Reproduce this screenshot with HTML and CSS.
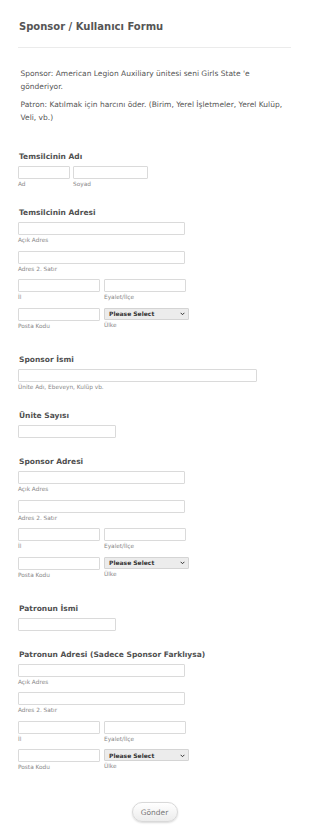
FILE: index.html
```html
<!DOCTYPE html>
<html lang="tr">
<head>
<meta charset="utf-8">
<title>Sponsor / Kullanıcı Formu</title>
<link rel="stylesheet" href="styles.css">
</head>
<body>
<div class="form">
  <h1 class="title">Sponsor / Kullanıcı Formu</h1>
  <hr class="rule">
  <div class="desc">
    <p>Sponsor: American Legion Auxiliary ünitesi seni Girls State 'e gönderiyor.</p>
    <p>Patron: Katılmak için harcını öder. (Birim, Yerel İşletmeler, Yerel Kulüp, Veli, vb.)</p>
  </div>

  <div class="field">
    <div class="label">Temsilcinin Adı</div>
    <div class="row tight">
      <div class="cell"><input class="input w-first" type="text"><span class="sub">Ad</span></div>
      <div class="cell"><input class="input w-last" type="text"><span class="sub">Soyad</span></div>
    </div>
  </div>

  <div class="field addr">
    <div class="label">Temsilcinin Adresi</div>
    <div class="row"><div class="cell"><input class="input w-full" type="text"><span class="sub">Açık Adres</span></div></div>
    <div class="row"><div class="cell"><input class="input w-full" type="text"><span class="sub">Adres 2. Satır</span></div></div>
    <div class="row">
      <div class="cell"><input class="input w-half" type="text"><span class="sub">İl</span></div>
      <div class="cell"><input class="input w-half" type="text"><span class="sub">Eyalet/İlçe</span></div>
    </div>
    <div class="row">
      <div class="cell"><input class="input w-half" type="text"><span class="sub">Posta Kodu</span></div>
      <div class="cell"><div class="select"><span>Please Select</span><svg class="chev" viewBox="0 0 8 5" width="5" height="3.5"><path d="M1 1 L4 4 L7 1" fill="none" stroke="#333" stroke-width="1.6"/></svg></div><span class="sub">Ülke</span></div>
    </div>
  </div>

  <div class="field">
    <div class="label">Sponsor İsmi</div>
    <div class="cell"><input class="input w-wide" type="text"><span class="sub">Ünite Adı, Ebeveyn, Kulüp vb.</span></div>
  </div>

  <div class="field nosub">
    <div class="label">Ünite Sayısı</div>
    <input class="input w-small" type="text">
  </div>

  <div class="field addr">
    <div class="label">Sponsor Adresi</div>
    <div class="row"><div class="cell"><input class="input w-full" type="text"><span class="sub">Açık Adres</span></div></div>
    <div class="row"><div class="cell"><input class="input w-full" type="text"><span class="sub">Adres 2. Satır</span></div></div>
    <div class="row">
      <div class="cell"><input class="input w-half" type="text"><span class="sub">İl</span></div>
      <div class="cell"><input class="input w-half" type="text"><span class="sub">Eyalet/İlçe</span></div>
    </div>
    <div class="row">
      <div class="cell"><input class="input w-half" type="text"><span class="sub">Posta Kodu</span></div>
      <div class="cell"><div class="select"><span>Please Select</span><svg class="chev" viewBox="0 0 8 5" width="5" height="3.5"><path d="M1 1 L4 4 L7 1" fill="none" stroke="#333" stroke-width="1.6"/></svg></div><span class="sub">Ülke</span></div>
    </div>
  </div>

  <div class="field nosub">
    <div class="label">Patronun İsmi</div>
    <input class="input w-small" type="text">
  </div>

  <div class="field last">
    <div class="label">Patronun Adresi (Sadece Sponsor Farklıysa)</div>
    <div class="row"><div class="cell"><input class="input w-full" type="text"><span class="sub">Açık Adres</span></div></div>
    <div class="row"><div class="cell"><input class="input w-full" type="text"><span class="sub">Adres 2. Satır</span></div></div>
    <div class="row">
      <div class="cell"><input class="input w-half" type="text"><span class="sub">İl</span></div>
      <div class="cell"><input class="input w-half" type="text"><span class="sub">Eyalet/İlçe</span></div>
    </div>
    <div class="row">
      <div class="cell"><input class="input w-half" type="text"><span class="sub">Posta Kodu</span></div>
      <div class="cell"><div class="select"><span>Please Select</span><svg class="chev" viewBox="0 0 8 5" width="5" height="3.5"><path d="M1 1 L4 4 L7 1" fill="none" stroke="#333" stroke-width="1.6"/></svg></div><span class="sub">Ülke</span></div>
    </div>
  </div>

  <div class="actions">
    <button class="btn" type="button">Gönder</button>
  </div>
</div>
</body>
</html>
```
FILE: styles.css
```css
* { box-sizing: border-box; }

body {
  margin: 0;
  background: #fff;
  font-family: "DejaVu Sans", Verdana, sans-serif;
  color: #555;
}

.form {
  padding: 20px 19px 30px 18px;
}

.title {
  margin: 0 0 0 1px;
  font-size: 10px;
  line-height: 14px;
  font-weight: bold;
  color: #555;
}

.rule {
  margin: 13px 0 0;
  border: 0;
  border-top: 1px solid #ebebeb;
  height: 0;
}

.desc {
  margin: 20.25px 0 27.5px;
  padding-left: 2.5px;
}

.desc p {
  margin: 0 0 6px;
  font-size: 7.5px;
  line-height: 12.5px;
  color: #555;
}

.desc p:last-child { margin-bottom: 0; }

.field { margin-bottom: 20.5px; }
.field.addr { margin-bottom: 25px; }
.field.nosub { margin-bottom: 19px; }
.field.last { margin-bottom: 31px; }

.label {
  margin: 0 0 4px 1px;
  font-size: 7.5px;
  line-height: 10px;
  font-weight: bold;
  color: #505050;
}

.row {
  display: flex;
  gap: 4px;
  margin-bottom: 6.5px;
}
.row.tight { gap: 3px; }
.row:last-child { margin-bottom: 0; }

.cell {
  display: flex;
  flex-direction: column;
  align-items: flex-start;
}

.input {
  display: block;
  height: 13px;
  margin: 0;
  padding: 0;
  border: 1px solid #dadada;
  border-radius: 1px;
  background: #fff;
  outline: none;
}

.w-first { width: 52px; }
.w-last { width: 75px; }
.w-full { width: 167px; }
.w-half { width: 82px; }
.w-wide { width: 239px; }
.w-small { width: 98px; }

.sub {
  display: block;
  margin-top: 1px;
  font-size: 5.8px;
  line-height: 8px;
  color: #888;
}

.select {
  display: flex;
  align-items: center;
  justify-content: space-between;
  width: 85px;
  height: 12px;
  padding: 0 3px 0 4px;
  border: 1px solid #d4d4d4;
  border-radius: 1px;
  background: #ececec;
  font-size: 6px;
  font-weight: bold;
  color: #333;
}

.chev { display: block; }

.actions {
  display: flex;
  justify-content: center;
}

.btn {
  width: 46px;
  height: 20px;
  padding: 0;
  border: 1px solid #d9d9d9;
  border-radius: 10px;
  background: linear-gradient(#ffffff, #ececec);
  box-shadow: 0 1px 2px rgba(0, 0, 0, 0.15);
  font-family: "DejaVu Sans", Verdana, sans-serif;
  font-size: 7.5px;
  color: #777;
}
```
